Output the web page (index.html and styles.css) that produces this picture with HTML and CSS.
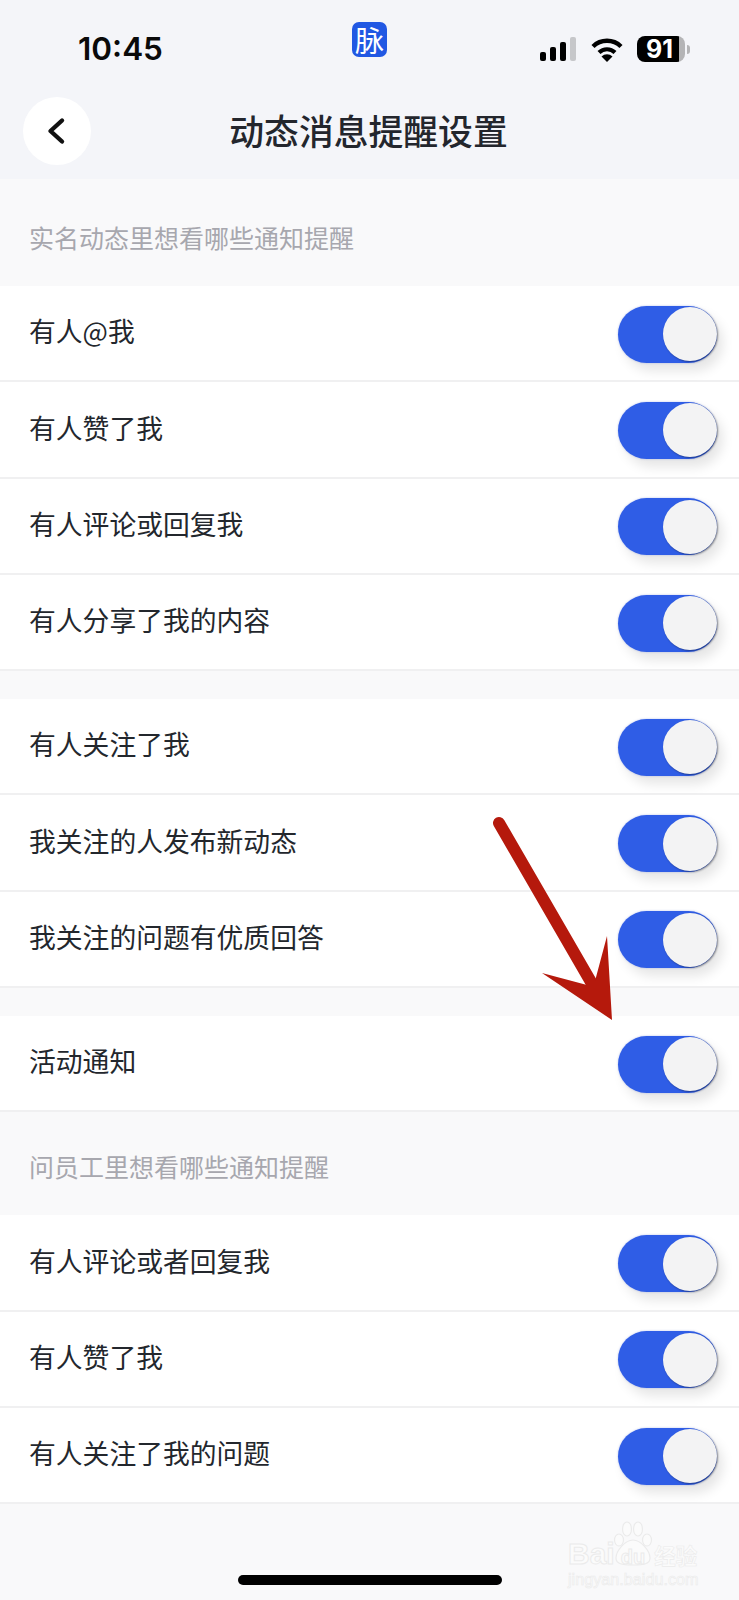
FILE: index.html
```html
<!DOCTYPE html>
<html lang="zh-CN">
<head>
    <meta charset="UTF-8">
    <meta name="viewport" content="width=device-width, initial-scale=1.0">
    <title>动态消息提醒设置</title>
    <link rel="stylesheet" href="styles.css">
</head>
<body>
    <!-- Header Section -->
    <header class="header">
        <div class="status-bar">
            <span class="time">10:45</span>
            <span class="app-icon">脉</span>
            <div class="status-icons">
                <svg class="signal" width="36" height="24" viewBox="0 0 36 24">
                    <rect x="0" y="15" width="6" height="9" rx="2" fill="#000"/>
                    <rect x="10" y="10" width="6" height="14" rx="2" fill="#000"/>
                    <rect x="20" y="5" width="6" height="19" rx="2" fill="#000"/>
                    <rect x="30" y="0" width="6" height="24" rx="2" fill="#c6c7ca"/>
                </svg>
                <svg class="wifi" width="32" height="25" viewBox="0 0 32 25">
                    <path d="M2 9.500A20 20 0 0 1 30 9.500" fill="none" stroke="#000" stroke-width="4.400"/>
                    <path d="M8 15.500A11.500 11.500 0 0 1 24 15.500" fill="none" stroke="#000" stroke-width="4.200"/>
                    <path d="M16 25L10.500 19.500A8 8 0 0 1 21.500 19.500Z" fill="#000"/>
                </svg>
                <div class="battery"><span class="battery-level">91</span></div>
                <span class="battery-nub"></span>
            </div>
        </div>
        <nav class="navbar">
            <a class="back-btn" href="#">
                <svg width="24" height="32" viewBox="0 0 24 32">
                    <path d="M18 5.500L6.500 16L18 26.500" fill="none" stroke="#111" stroke-width="4.400" stroke-linecap="round" stroke-linejoin="round"/>
                </svg>
            </a>
            <h1>动态消息提醒设置</h1>
        </nav>
    </header>

    <h2 class="section-label">实名动态里想看哪些通知提醒</h2>
    <ul class="group">
        <li class="row">有人@我<div class="toggle"><span class="knob"></span></div></li>
        <li class="row">有人赞了我<div class="toggle"><span class="knob"></span></div></li>
        <li class="row">有人评论或回复我<div class="toggle"><span class="knob"></span></div></li>
        <li class="row">有人分享了我的内容<div class="toggle"><span class="knob"></span></div></li>
    </ul>
    <ul class="group spaced">
        <li class="row">有人关注了我<div class="toggle"><span class="knob"></span></div></li>
        <li class="row">我关注的人发布新动态<div class="toggle"><span class="knob"></span></div></li>
        <li class="row">我关注的问题有优质回答<div class="toggle"><span class="knob"></span></div></li>
    </ul>
    <ul class="group spaced">
        <li class="row">活动通知<div class="toggle"><span class="knob"></span></div></li>
    </ul>

    <h2 class="section-label">问员工里想看哪些通知提醒</h2>
    <ul class="group">
        <li class="row">有人评论或者回复我<div class="toggle"><span class="knob"></span></div></li>
        <li class="row">有人赞了我<div class="toggle"><span class="knob"></span></div></li>
        <li class="row">有人关注了我的问题<div class="toggle"><span class="knob"></span></div></li>
    </ul>

    <footer class="footer">
        <span class="home-bar"></span>
    </footer>

    <!-- Annotation arrow drawn over the list -->
    <svg class="arrow" width="739" height="1600" viewBox="0 0 739 1600">
        <path d="M499 823L591 982" fill="none" stroke="#b5190c" stroke-width="12" stroke-linecap="round"/>
        <path d="M612 1020L607 936L595 981L587 985L542 973Z" fill="#b5190c"/>
    </svg>

    <!-- Watermark -->
    <div class="watermark">
        <svg class="paw" width="40" height="46" viewBox="0 0 40 46">
            <g fill="#fbfbfb" stroke="#ebebeb" stroke-width="1.200">
                <ellipse cx="6" cy="19" rx="4.500" ry="6"/>
                <ellipse cx="14" cy="8" rx="4.500" ry="7"/>
                <ellipse cx="25" cy="8" rx="4.500" ry="7"/>
                <ellipse cx="34" cy="19" rx="4.500" ry="6"/>
                <path d="M20 19C28 19 37 30 37 37C37 43 31 44 20 44C9 44 3 43 3 37C3 30 12 19 20 19Z"/>
            </g>
        </svg>
        <div class="wm-brand">Bai<span class="wm-du">du</span><span class="wm-cn">经验</span></div>
        <div class="wm-url">jingyan.baidu.com</div>
    </div>
</body>
</html>
```

FILE: styles.css
```css
* {
    margin: 0;
    padding: 0;
    box-sizing: border-box;
}

body {
    width: 739px;
    height: 1600px;
    overflow: hidden;
    position: relative;
    display: flex;
    flex-direction: column;
    font-family: "Noto Sans CJK SC", "Noto Sans", sans-serif;
    background-color: #f9f9fa;
    color: #23272d;
}

/* Header Section */
.header {
    height: 179px;
    margin-bottom: 4px;
    background-color: #f4f5f9;
}

.status-bar {
    height: 80px;
    display: grid;
    grid-template-columns: 1fr auto 1fr;
    padding: 22px 49px 0;
}

.time {
    padding-left: 29px;
    font-family: Inter, "Liberation Sans", sans-serif;
    font-size: 31.500px;
    font-weight: 600;
    line-height: 54px;
    color: #0a0a0a;
}

.app-icon {
    width: 35px;
    height: 35px;
    display: flex;
    align-items: center;
    justify-content: center;
    border-radius: 7px;
    background-color: #2158e3;
    color: #fff;
    font-size: 29px;
    line-height: 1;
}

.status-icons {
    display: flex;
    align-items: center;
    justify-content: flex-end;
    height: 54px;
}

.signal {
    margin-right: 15px;
}

.wifi {
    margin-right: 14px;
}

.battery {
    width: 48px;
    height: 26px;
    border-radius: 8px;
    display: flex;
    align-items: center;
    padding-left: 9px;
    background: linear-gradient(to right, #000 88%, #b4b4b6 88%);
}

.battery-level {
    font-family: Inter, "Liberation Sans", sans-serif;
    font-size: 25px;
    font-weight: 700;
    line-height: 1;
    color: #fff;
}

.battery-nub {
    width: 3px;
    height: 9px;
    margin-left: 2px;
    border-radius: 0 3px 3px 0;
    background-color: #b4b4b6;
}

/* Navigation */
.navbar {
    display: grid;
    grid-template-columns: 1fr auto 1fr;
    align-items: center;
    padding: 17px 23px 0;
}

.back-btn {
    width: 68px;
    height: 68px;
    display: flex;
    align-items: center;
    justify-content: center;
    border-radius: 50%;
    background-color: #fff;
    padding-right: 2px;
}

h1 {
    padding-bottom: 2px;
    margin-left: -2px;
    font-size: 34.800px;
    font-weight: 500;
    line-height: 66px;
    color: #23262d;
}

/* Settings list */
.section-label {
    height: 103px;
    display: flex;
    align-items: center;
    padding: 5px 0 0 29px;
    font-size: 25px;
    font-weight: 400;
    color: #a7a7ae;
}

.group {
    list-style: none;
    background-color: #fff;
}

.group.spaced {
    margin-top: 28px;
}

.row {
    height: 96.300px;
    display: flex;
    align-items: center;
    justify-content: space-between;
    padding: 0 22px 3px 29px;
    border-bottom: 2px solid #f0f0f1;
    font-size: 26.800px;
    line-height: 1;
}

.toggle {
    width: 99px;
    height: 57px;
    margin-top: 5px;
    display: flex;
    align-items: center;
    justify-content: flex-end;
    border-radius: 29px;
    background-color: #2f5de6;
    box-shadow: 0 0 2px rgba(100, 125, 220, 0.5), 6px 8px 12px rgba(0, 0, 0, 0.1);
}

.knob {
    width: 54px;
    height: 54px;
    border-radius: 50%;
    background-color: #f3f3f4;
    box-shadow: 1px 1px 2px rgba(0, 0, 0, 0.4);
}

/* Bottom area */
.footer {
    flex: 1;
    display: flex;
    align-items: flex-end;
    padding: 0 0 15px 238px;
}

.home-bar {
    width: 264px;
    height: 10px;
    border-radius: 5px;
    background-color: #000;
}

.arrow {
    position: absolute;
    top: 0;
    left: 0;
}

.watermark {
    position: absolute;
    left: 568px;
    top: 1521px;
    width: 132px;
    color: #fbfbfb;
}

.paw {
    position: absolute;
    left: 45px;
    top: 0;
}

.wm-brand {
    position: absolute;
    top: 17px;
    left: 0;
    white-space: nowrap;
    font-family: "Liberation Sans", sans-serif;
    font-size: 30px;
    font-weight: 700;
    line-height: 32px;
    -webkit-text-stroke: 1px #ebebeb;
}

.wm-du {
    position: relative;
    margin: 0 9px 0 6px;
    font-size: 20px;
}

.wm-cn {
    font-family: "Noto Sans CJK SC", sans-serif;
    font-size: 21.500px;
    -webkit-text-stroke: 0.6px #ebebeb;
}

.wm-url {
    position: absolute;
    top: 49px;
    left: 0;
    white-space: nowrap;
    font-family: "Liberation Sans", sans-serif;
    font-size: 16.200px;
    line-height: 18px;
    -webkit-text-stroke: 0.6px #ebebeb;
}
```
